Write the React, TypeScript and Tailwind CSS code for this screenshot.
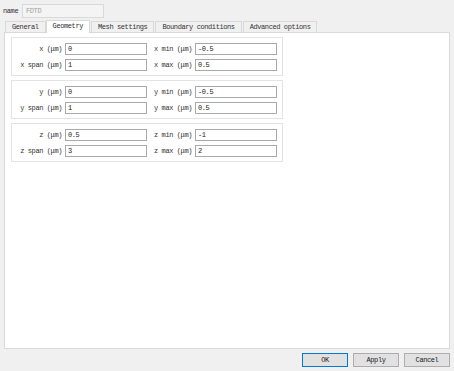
import React from "react";

const font = { fontFamily: '"Liberation Mono", "Noto Sans CJK SC", monospace' };

interface Row {
  a: string;
  av: string;
  b: string;
  bv: string;
}

const groups: Row[][] = [
  [
    { a: "x (μm)", av: "0", b: "x min (μm)", bv: "-0.5" },
    { a: "x span (μm)", av: "1", b: "x max (μm)", bv: "0.5" },
  ],
  [
    { a: "y (μm)", av: "0", b: "y min (μm)", bv: "-0.5" },
    { a: "y span (μm)", av: "1", b: "y max (μm)", bv: "0.5" },
  ],
  [
    { a: "z (μm)", av: "0.5", b: "z min (μm)", bv: "-1" },
    { a: "z span (μm)", av: "3", b: "z max (μm)", bv: "2" },
  ],
];

const tabs = ["General", "Geometry", "Mesh settings", "Boundary conditions", "Advanced options"];

function Field({ value }: { value: string }) {
  return (
    <div className="w-[82px] h-[12px] border border-[#a9a9a9] bg-white flex items-center pl-[2px] text-[7px] text-[#222] leading-none">
      {value}
    </div>
  );
}

export default function App() {
  return (
    <div
      className="w-[454px] h-[371px] bg-[#f0f0f0] flex flex-col text-[7px] tracking-[-0.4px] text-[#333] overflow-hidden"
      style={font}
    >
      {/* name row */}
      <div className="flex items-center h-[14px] mt-[4px] pl-[3px]">
        <span className="w-[19px]">name</span>
        <div className="w-[82px] h-[14px] border border-[#d9d9d9] bg-[#f4f4f4] flex items-center pl-[3px] text-[#a0a0a0]">
          FDTD
        </div>
      </div>

      {/* tabs */}
      <div className="flex items-end h-[13px] mt-[1px] pl-[5px] relative z-10">
        {tabs.map((t, i) =>
          i === 1 ? (
            <div
              key={t}
              className="h-[13px] px-[6px] bg-white border border-b-0 border-[#d9d9d9] flex items-center -mb-[1px] pb-[2px]"
            >
              {t}
            </div>
          ) : (
            <div
              key={t}
              className="h-[11px] px-[6px] bg-[#f0f0f0] border border-b-0 border-[#d9d9d9] flex items-center ml-[1px] first:ml-0"
            >
              {t}
            </div>
          )
        )}
      </div>

      {/* panel */}
      <div className="mx-[4px] w-[446px] h-[317px] bg-white border border-[#d9d9d9] pt-[4px] pl-[6px] flex flex-col gap-[4px]">
        {groups.map((rows, gi) => (
          <div
            key={gi}
            className="w-[272px] border border-[#e3e3e3] pt-[5px] pb-[4px] flex flex-col gap-[4px]"
          >
            {rows.map((r) => (
              <div key={r.a} className="flex items-center h-[12px]">
                <span className="w-[53px] text-right pr-[3px] shrink-0">{r.a}</span>
                <Field value={r.av} />
                <span className="w-[48px] text-right pr-[3px] shrink-0">{r.b}</span>
                <Field value={r.bv} />
              </div>
            ))}
          </div>
        ))}
      </div>

      {/* buttons */}
      <div className="flex justify-end gap-[5px] pr-[4px] mt-[4px]">
        <button className="w-[46px] h-[14px] bg-[#e1e1e1] border border-[#0078d7] flex items-center justify-center text-[#222]">
          OK
        </button>
        <button className="w-[46px] h-[14px] bg-[#e1e1e1] border border-[#adadad] flex items-center justify-center text-[#222]">
          Apply
        </button>
        <button className="w-[46px] h-[14px] bg-[#e1e1e1] border border-[#adadad] flex items-center justify-center text-[#222]">
          Cancel
        </button>
      </div>
    </div>
  );
}
